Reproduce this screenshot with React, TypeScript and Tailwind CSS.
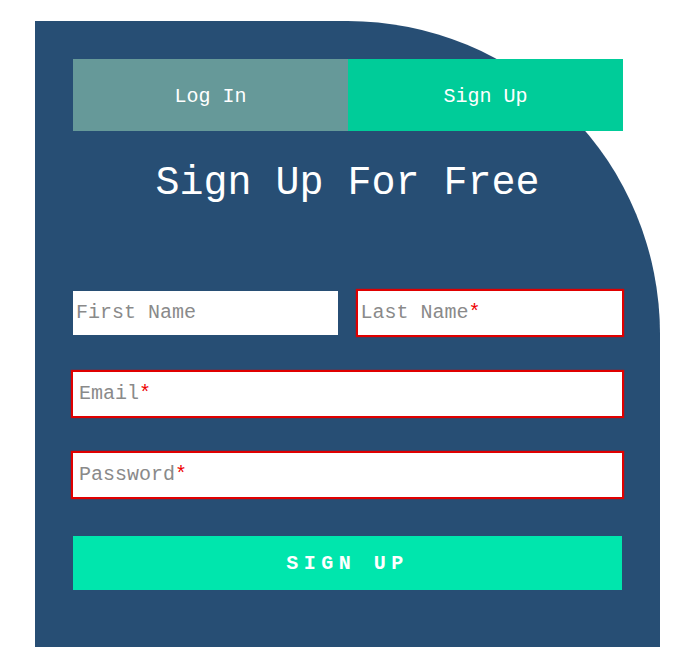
import React, { useState } from 'react'

const mono = { fontFamily: '"Liberation Mono", "Courier New", monospace' }

type FieldProps = {
  label: string
  type?: string
  required?: boolean
  pad?: string
}

const Field = ({ label, type = 'text', required = false, pad = 'pl-[3px]' }: FieldProps) => {
  const [value, setValue] = useState('')
  return (
    <div
      className={`relative h-[44px] w-full bg-white ${
        required ? 'shadow-[0_0_1px_2px_#e00000]' : ''
      }`}
    >
      <input
        type={type}
        value={value}
        onChange={(e) => setValue(e.target.value)}
        className={`h-full w-full bg-transparent text-[20px] text-[#333] outline-none ${pad}`}
        style={mono}
      />
      {value === '' && (
        <span
          className={`pointer-events-none absolute inset-y-0 left-0 flex items-center text-[20px] text-[#8a8a8a] ${pad}`}
          style={mono}
        >
          {label}
          {required && <span className="text-[#ee0000]">*</span>}
        </span>
      )}
    </div>
  )
}

const App = () => {
  const [tab, setTab] = useState<'login' | 'signup'>('signup')

  return (
    <div className="min-h-[667px] bg-white pl-[35px] pt-[21px]" style={mono}>
      <div className="flex h-[626px] w-[625px] flex-col rounded-tr-[50%] bg-[#274e74] px-[38px] pt-[38px]">
        <div className="flex h-[72px] w-[550px]">
          <button
            onClick={() => setTab('login')}
            className="flex-1 bg-[#669999] pt-[4px] text-[20px] text-white"
            style={mono}
          >
            Log In
          </button>
          <button
            onClick={() => setTab('signup')}
            className="flex-1 bg-[#00cc99] pt-[4px] text-[20px] text-white"
            style={mono}
          >
            Sign Up
          </button>
        </div>

        <h1 className="mt-[33px] mb-[87px] text-center text-[40px] leading-[40px] font-normal text-white">
          Sign Up For Free
        </h1>

        <form className="flex flex-col" onSubmit={(e) => e.preventDefault()}>
          <div className="flex gap-[20px]">
            <Field label="First Name" />
            <Field label="Last Name" required />
          </div>
          <div className="mt-[37px]">
            <Field label="Email" type="email" required pad="pl-[6px]" />
          </div>
          <div className="mt-[37px]">
            <Field label="Password" type="password" required pad="pl-[6px]" />
          </div>
          <button
            type="submit"
            className="mt-[39px] h-[54px] w-full bg-[#00e6ad] pt-[2px] text-[20px] font-bold tracking-[5.5px] text-white"
            style={mono}
          >
            SIGN UP
          </button>
        </form>
      </div>
    </div>
  )
}

export default App
